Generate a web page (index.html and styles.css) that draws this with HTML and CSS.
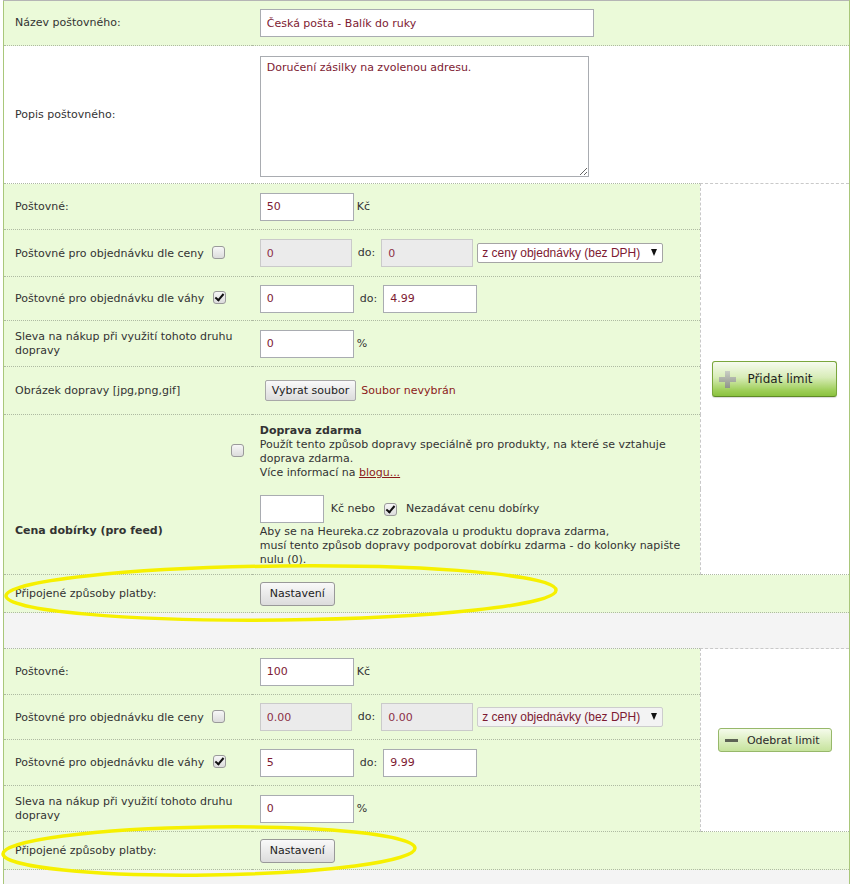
FILE: index.html
```html
<!DOCTYPE html>
<html lang="cs">
<head>
  <meta charset="UTF-8">
  <title>Nastavení dopravy</title>
  <link rel="stylesheet" href="styles.css">
</head>
<body>

<div class="page">
<table class="shipping">
  <colgroup>
    <col class="c-label">
    <col class="c-value">
    <col class="c-side">
  </colgroup>

  <!-- Název a popis -->
  <tr class="h45">
    <td class="label">Název poštovného:</td>
    <td colspan="2"><input class="inp inp-name" type="text" value="Česká pošta - Balík do ruky"></td>
  </tr>
  <tr class="h138 white">
    <td class="label">Popis poštovného:</td>
    <td colspan="2"><textarea class="area">Doručení zásilky na zvolenou adresu.</textarea></td>
  </tr>

  <!-- První limit -->
  <tr class="h46">
    <td class="label">Poštovné:</td>
    <td><div class="field"><input class="inp" type="text" value="50"><span class="unit">Kč</span></div></td>
    <td class="side" rowspan="7">
      <button class="btn-add" type="button">
        <svg width="17" height="17" viewBox="0 0 17 17">
          <defs>
            <linearGradient id="plusg" x1="0" y1="0" x2="0" y2="1">
              <stop offset="0" stop-color="#c9cdc4"/>
              <stop offset="1" stop-color="#8f948a"/>
            </linearGradient>
          </defs>
          <path d="M6 0h5v6h6v5h-6v6H6v-6H0V6h6z" fill="url(#plusg)"/>
        </svg>
        Přidat limit
      </button>
    </td>
  </tr>
  <tr class="h47">
    <td class="label">Poštovné pro objednávku dle ceny <input class="chk" type="checkbox"></td>
    <td>
      <div class="field">
        <input class="inp inp-off" type="text" value="0" disabled>
        <span class="to">do:</span>
        <input class="inp inp-off" type="text" value="0" disabled>
        <span class="select"><select><option>z ceny objednávky (bez DPH)</option></select></span>
      </div>
    </td>
  </tr>
  <tr class="h44">
    <td class="label">Poštovné pro objednávku dle váhy <input class="chk" type="checkbox" checked></td>
    <td>
      <div class="field">
        <input class="inp" type="text" value="0">
        <span class="to">do:</span>
        <input class="inp" type="text" value="4.99">
      </div>
    </td>
  </tr>
  <tr class="h46">
    <td class="label">Sleva na nákup při využití tohoto druhu dopravy</td>
    <td><div class="field"><input class="inp" type="text" value="0"><span class="unit">%</span></div></td>
  </tr>
  <tr class="h48">
    <td class="label">Obrázek dopravy [jpg,png,gif]</td>
    <td>
      <div class="field file">
        <button class="btn-gray" type="button">Vybrat soubor</button>
        <span class="no-file">Soubor nevybrán</span>
      </div>
    </td>
  </tr>
  <tr class="h74 flat">
    <td class="label right"><input class="chk" type="checkbox"></td>
    <td>
      <strong>Doprava zdarma</strong><br>
      Použít tento způsob dopravy speciálně pro produkty, na které se vztahuje doprava zdarma.<br>
      Více informací na <a href="#">blogu...</a>
    </td>
  </tr>
  <tr class="h86">
    <td class="label"><strong>Cena dobírky (pro feed)</strong></td>
    <td>
      <div class="field cod">
        <input class="inp inp-small" type="text" value="">
        <span>Kč nebo</span>
        <input class="chk" type="checkbox" checked>
        <span>Nezadávat cenu dobírky</span>
      </div>
      <p class="note">Aby se na Heureka.cz zobrazovala u produktu doprava zdarma,<br>
      musí tento způsob dopravy podporovat dobírku zdarma - do kolonky napište nulu (0).</p>
    </td>
  </tr>
  <tr class="h38">
    <td class="label">Připojené způsoby platby:</td>
    <td colspan="2"><button class="btn-gray btn-set" type="button">Nastavení</button></td>
  </tr>

  <tr class="h36 gap"><td colspan="3"></td></tr>

  <!-- Druhý limit -->
  <tr class="h46">
    <td class="label">Poštovné:</td>
    <td><div class="field"><input class="inp" type="text" value="100"><span class="unit">Kč</span></div></td>
    <td class="side" rowspan="4">
      <button class="btn-remove" type="button"><span class="minus"></span>Odebrat limit</button>
    </td>
  </tr>
  <tr class="h45">
    <td class="label">Poštovné pro objednávku dle ceny <input class="chk" type="checkbox"></td>
    <td>
      <div class="field">
        <input class="inp inp-off" type="text" value="0.00" disabled>
        <span class="to">do:</span>
        <input class="inp inp-off" type="text" value="0.00" disabled>
        <span class="select select-off"><select><option>z ceny objednávky (bez DPH)</option></select></span>
      </div>
    </td>
  </tr>
  <tr class="h46">
    <td class="label">Poštovné pro objednávku dle váhy <input class="chk" type="checkbox" checked></td>
    <td>
      <div class="field">
        <input class="inp" type="text" value="5">
        <span class="to">do:</span>
        <input class="inp" type="text" value="9.99">
      </div>
    </td>
  </tr>
  <tr class="h46">
    <td class="label">Sleva na nákup při využití tohoto druhu dopravy</td>
    <td><div class="field"><input class="inp" type="text" value="0"><span class="unit">%</span></div></td>
  </tr>
  <tr class="h38">
    <td class="label">Připojené způsoby platby:</td>
    <td colspan="2"><button class="btn-gray btn-set" type="button">Nastavení</button></td>
  </tr>

  <tr class="h36 gap"><td colspan="3"></td></tr>
</table>

<!-- žluté zvýraznění -->
<svg class="marks" width="857" height="884" viewBox="0 0 857 884">
  <ellipse cx="281" cy="593" rx="275" ry="27" transform="rotate(-0.6 281 593)"/>
  <ellipse cx="209" cy="851" rx="206" ry="24" transform="rotate(-0.8 209 851)"/>
</svg>
</div>

</body>
</html>
```

FILE: styles.css
```css
/* Základ */
body {
  margin: 0;
  font-family: "DejaVu Sans", Verdana, sans-serif;
  font-size: 11px;
  color: #333;
  background: #fff;
}

.page {
  position: relative;
  padding-left: 3px;
}

/* Tabulka */
.shipping {
  width: 847px;
  border-collapse: collapse;
  table-layout: fixed;
  border-top: 1px solid #b5b5b5;
  border-left: 1px solid #a9c77a;
  border-right: 1px solid #a9c77a;
}

.c-label { width: 248px; }
.c-value { width: 448px; }
.c-side { width: 149px; }

.shipping td {
  background: #ebfad9;
  border-bottom: 1px dotted #aebaa2;
  padding: 0 8px;
  vertical-align: middle;
  line-height: 14px;
}

.shipping td.label {
  padding-left: 11px;
}

.shipping td.right {
  text-align: right;
}

.shipping tr.white td {
  background: #fff;
}

.shipping tr.flat td {
  border-bottom: none;
}

.shipping tr.gap td {
  background: #f4f4f4;
}

.shipping td.side {
  background: #fff;
  border-left: 1px dashed #c9c9c9;
  border-top: 1px dashed #c9c9c9;
  text-align: center;
}

.h36 { height: 36px; }
.h38 { height: 38px; }
.h44 { height: 44px; }
.h45 { height: 45px; }
.h46 { height: 46px; }
.h47 { height: 47px; }
.h48 { height: 48px; }
.h74 { height: 74px; }
.h86 { height: 86px; }
.h138 { height: 138px; }

/* Pole */
.field {
  display: flex;
  align-items: center;
  gap: 5px;
}

.field .unit {
  margin-left: -2px;
}

.field .to {
  margin: 0 1px 0 1px;
}

.inp {
  box-sizing: border-box;
  width: 94px;
  height: 28px;
  margin: 0;
  padding: 0 6px;
  border: 1px solid #a9acb1;
  background: #fff;
  font: 11px "DejaVu Sans", Verdana, sans-serif;
  color: #7d1a32;
}

.inp-name {
  width: 334px;
}

.inp-off {
  width: 92px;
  background: #ebebeb;
  border-color: #cacaca;
  color: #8c3048;
}

.inp-small {
  width: 64px;
}

.area {
  box-sizing: border-box;
  display: block;
  width: 329px;
  height: 121px;
  margin: 4px 0 0;
  padding: 4px 6px;
  border: 1px solid #a9acb1;
  font: 11px "DejaVu Sans", Verdana, sans-serif;
  line-height: 14px;
  color: #7d1a32;
}

.select {
  position: relative;
  display: inline-block;
  margin-left: -1px;
}

.select select {
  appearance: none;
  box-sizing: border-box;
  width: 186px;
  height: 20px;
  margin: 0;
  padding: 0 14px 0 4px;
  border: 1px solid #a5a5a5;
  border-radius: 2px;
  background: #fff;
  font: 12px "Liberation Sans", Arial, sans-serif;
  color: #7d1a32;
}

.select::after {
  content: "";
  position: absolute;
  right: 6px;
  top: 6px;
  border-left: 3px solid transparent;
  border-right: 3px solid transparent;
  border-top: 7px solid #111;
  pointer-events: none;
}

.select-off select {
  background: #f3f3f3;
  border-color: #cdcdcd;
}

/* Checkbox */
.chk {
  appearance: none;
  position: relative;
  box-sizing: border-box;
  width: 13px;
  height: 13px;
  margin: 0 0 0 5px;
  vertical-align: -2px;
  border: 1px solid #9a9a9a;
  border-radius: 3px;
  background: linear-gradient(#f7f7f7, #dcdcdc);
}

.chk:checked::after {
  content: "";
  position: absolute;
  left: 3px;
  top: 0;
  width: 3px;
  height: 7px;
  border-right: 2px solid #111;
  border-bottom: 2px solid #111;
  transform: rotate(40deg);
}

.right .chk {
  margin: 0;
}

/* Doprava zdarma */
strong {
  color: #333;
}

a {
  color: #8b1a1a;
}

.cod {
  gap: 7px;
}

.cod .chk {
  margin: 0 2px;
}

.note {
  margin: 2px 0 0;
}

/* Tlačítka */
.btn-gray {
  box-sizing: border-box;
  height: 21px;
  margin: 0;
  padding: 0 6px;
  border: 1px solid #a8a8a8;
  border-radius: 2px;
  background: linear-gradient(#f9f9f9, #dcdcdc);
  font: 11px "DejaVu Sans", Verdana, sans-serif;
  color: #222;
}

.file .btn-gray {
  margin-left: 5px;
}

.no-file {
  color: #8b1a1a;
}

.btn-set {
  width: 75px;
  height: 24px;
  padding: 0;
  border-color: #999;
  border-radius: 3px;
}

.btn-add {
  display: inline-flex;
  align-items: center;
  gap: 11px;
  box-sizing: border-box;
  width: 125px;
  height: 36px;
  padding: 0 0 0 6px;
  border: 1px solid #7aa63c;
  border-bottom-color: #5f8a26;
  border-radius: 3px;
  background: linear-gradient(#f6fbee 0%, #d8ecb8 45%, #9ccd55 85%, #8ac23f 100%);
  box-shadow: 0 1px 1px rgba(0, 0, 0, 0.15);
  font: 12px "DejaVu Sans", Verdana, sans-serif;
  color: #1e1e1e;
}

.btn-remove {
  display: inline-flex;
  align-items: center;
  gap: 9px;
  box-sizing: border-box;
  width: 114px;
  height: 24px;
  padding: 0 0 0 6px;
  border: 1px solid #97b86a;
  border-radius: 3px;
  background: linear-gradient(#f5fbeb, #c6e39c);
  font: 11px "DejaVu Sans", Verdana, sans-serif;
  color: #2a2a2a;
}

.minus {
  display: inline-block;
  width: 13px;
  height: 3px;
  background: #5d6355;
}

/* Zvýraznění */
.marks {
  position: absolute;
  top: 0;
  left: 0;
  pointer-events: none;
}

.marks ellipse {
  fill: none;
  stroke: #f6f000;
  stroke-width: 3.5;
}
```
